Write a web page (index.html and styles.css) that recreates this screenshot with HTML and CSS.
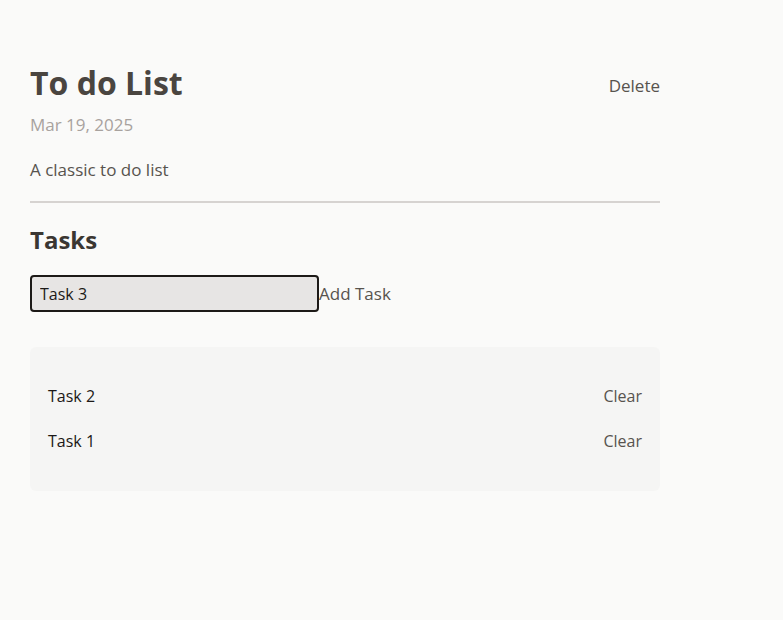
FILE: index.html
```html
<!DOCTYPE html>
<html>
<head>
<meta charset="utf-8">
<link rel="stylesheet" href="styles.css">
</head>
<body>
<main class="page">
  <header class="head">
    <h1 class="title">To do List</h1>
    <button class="link-btn delete">Delete</button>
  </header>
  <div class="date">Mar 19, 2025</div>
  <p class="desc">A classic to do list</p>
  <hr class="divider">
  <h2 class="section">Tasks</h2>
  <form class="add-row">
    <input class="task-input" type="text" value="Task 3">
    <button type="button" class="link-btn add">Add Task</button>
  </form>
  <ul class="list">
    <li class="item"><span class="item-text">Task 2</span><button class="link-btn clear">Clear</button></li>
    <li class="item"><span class="item-text">Task 1</span><button class="link-btn clear">Clear</button></li>
  </ul>
</main>
</body>
</html>
```
FILE: styles.css
```css
* { box-sizing: border-box; }
html, body {
  margin: 0;
  background: #fafaf9;
  font-family: "Open Sans", "Noto Sans", sans-serif;
  color: #44403c;
}
.page {
  width: 630px;
  margin: 0 0 0 30px;
  padding-top: 61px;
}
.head {
  display: flex;
  justify-content: space-between;
  align-items: center;
}
.title {
  margin: 0;
  font-size: 32px;
  font-weight: 700;
  color: #4a4540;
  line-height: 44px;
}
.link-btn {
  background: none;
  border: none;
  padding: 0;
  font-family: inherit;
  font-size: 17px;
  color: #57534e;
  cursor: pointer;
}
.delete { margin-top: 4px; }
.date {
  margin-top: 8px;
  font-size: 17px;
  color: #a8a29e;
  line-height: 24px;
}
.desc {
  margin: 21px 0 0;
  font-size: 17px;
  line-height: 24px;
  color: #57534e;
}
.divider {
  margin: 19px 0 0;
  border: none;
  border-top: 2px solid #d6d3d1;
}
.section {
  margin: 21px 0 0;
  font-size: 24px;
  font-weight: 700;
  line-height: 32px;
  color: #3a3632;
}
.add-row {
  display: flex;
  align-items: center;
  margin-top: 19px;
}
.task-input {
  width: 289px;
  height: 37px;
  background: #e7e5e4;
  border: 2px solid #1c1917;
  border-radius: 4px;
  padding: 0 8px;
  font-family: inherit;
  font-size: 16px;
  color: #1c1917;
  outline: none;
}
.list {
  list-style: none;
  margin: 35px 0 0;
  padding: 37px 18px 38px;
  background: #f5f5f4;
  border-radius: 6px;
  display: flex;
  flex-direction: column;
  gap: 21px;
}
.item {
  display: flex;
  justify-content: space-between;
  align-items: center;
  line-height: 24px;
}
.item-text { font-size: 16px; color: #1c1917; }
.clear { font-size: 16px; color: #57534e; }
```
